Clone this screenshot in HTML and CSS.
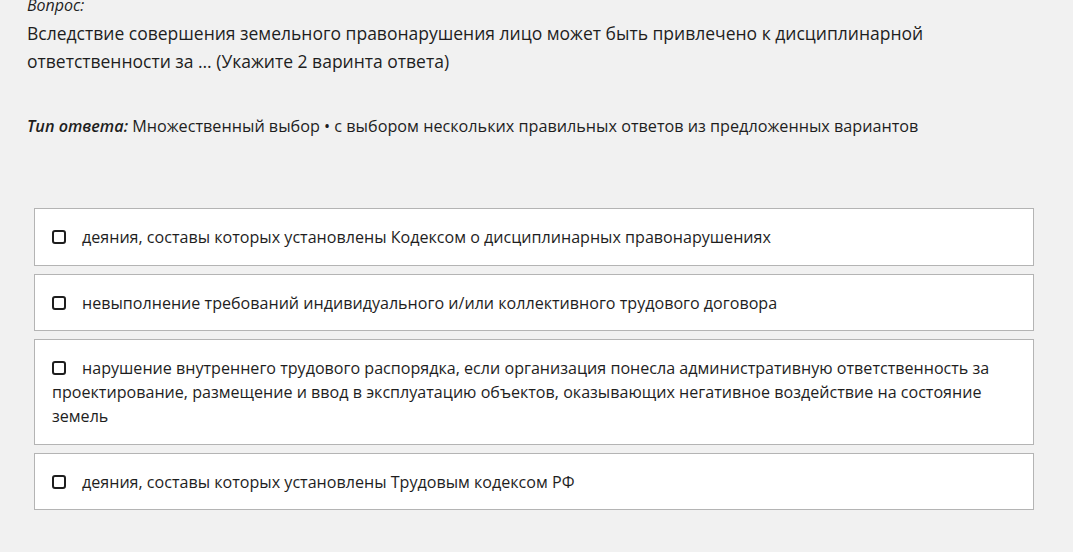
FILE: index.html
```html
<!DOCTYPE html>
<html lang="ru">
<head>
<meta charset="utf-8">
<title>Вопрос</title>
<link rel="stylesheet" href="styles.css">
</head>
<body>
<main class="quiz">
  <section class="question">
    <div class="question-label">Вопрос:</div>
    <p class="question-text">Вследствие совершения земельного правонарушения лицо может быть привлечено к дисциплинарной ответственности за … (Укажите 2 варинта ответа)</p>
  </section>
  <p class="answer-type"><span class="answer-type-label">Тип ответа:</span> Множественный выбор • с выбором нескольких правильных ответов из предложенных вариантов</p>
  <ul class="options">
    <li class="option"><span class="checkbox"></span>деяния, составы которых установлены Кодексом о дисциплинарных правонарушениях</li>
    <li class="option"><span class="checkbox"></span>невыполнение требований индивидуального и/или коллективного трудового договора</li>
    <li class="option"><span class="checkbox"></span>нарушение внутреннего трудового распорядка, если организация понесла административную ответственность за проектирование, размещение и ввод в эксплуатацию объектов, оказывающих негативное воздействие на состояние земель</li>
    <li class="option"><span class="checkbox"></span>деяния, составы которых установлены Трудовым кодексом РФ</li>
  </ul>
</main>
</body>
</html>
```

FILE: styles.css
```css
html, body {
  margin: 0;
  padding: 0;
  background: #f1f1f1;
}

body {
  font-family: "Open Sans", "Noto Sans", sans-serif;
  color: #1e1e1e;
}

.quiz {
  margin-top: -9px;
  padding: 0 39px 0 27px;
}

.question-label {
  font-style: italic;
  font-size: 16px;
  line-height: 28px;
}

.question-text {
  margin: 0;
  font-size: 17.5px;
  line-height: 28px;
}

.answer-type {
  margin: 37px 0 0;
  font-size: 16.2px;
  line-height: 28px;
}

.answer-type-label {
  font-weight: 600;
  font-style: italic;
}

.options {
  list-style: none;
  margin: 68px 0 0 7px;
  padding: 0;
  display: flex;
  flex-direction: column;
  gap: 8px;
}

.option {
  background: #fff;
  border: 1px solid #b4b4b4;
  padding: 16px 17px 15.5px;
  font-size: 16.1px;
  line-height: 24px;
}

.checkbox {
  display: inline-block;
  box-sizing: border-box;
  width: 14px;
  height: 14px;
  border: 2px solid #1e1e1e;
  border-radius: 3px;
  margin-right: 16px;
  vertical-align: -1px;
}
```
